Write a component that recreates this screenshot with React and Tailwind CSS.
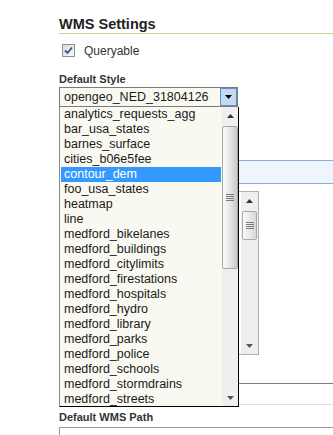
import React from "react";

const styles = [
  "analytics_requests_agg",
  "bar_usa_states",
  "barnes_surface",
  "cities_b06e5fee",
  "contour_dem",
  "foo_usa_states",
  "heatmap",
  "line",
  "medford_bikelanes",
  "medford_buildings",
  "medford_citylimits",
  "medford_firestations",
  "medford_hospitals",
  "medford_hydro",
  "medford_library",
  "medford_parks",
  "medford_police",
  "medford_schools",
  "medford_stormdrains",
  "medford_streets",
];

function Arrow({ up, color = "#333" }) {
  return (
    <svg width="7" height="4" viewBox="0 0 7 4">
      {up ? (
        <path d="M0 4 L3.5 0 L7 4 Z" fill={color} />
      ) : (
        <path d="M0 0 L7 0 L3.5 4 Z" fill={color} />
      )}
    </svg>
  );
}

function Grip() {
  return (
    <div className="flex flex-col gap-[1px]">
      <div className="w-[8px] h-[1px] bg-[#7a7a7a]" />
      <div className="w-[8px] h-[1px] bg-[#7a7a7a]" />
      <div className="w-[8px] h-[1px] bg-[#7a7a7a]" />
      <div className="w-[8px] h-[1px] bg-[#7a7a7a]" />
    </div>
  );
}

function Checkbox() {
  return (
    <div className="w-[13px] h-[13px] border border-[#8f8f8f] bg-gradient-to-br from-[#dcdcdc] to-[#f7f7f7] flex items-center justify-center">
      <svg width="9" height="9" viewBox="0 0 9 9">
        <path d="M1 4.5 L3.5 7 L8 1.5" stroke="#3a4f9a" strokeWidth="1.8" fill="none" />
      </svg>
    </div>
  );
}

export default function App() {
  return (
    <div className="relative w-[333px] h-[435px] overflow-hidden bg-white font-['Liberation_Sans',Arial,sans-serif] text-[#222]">
      <div className="pl-[59px] pt-[16px]">
        <h2 className="text-[14.5px] leading-[17px] font-bold text-[#222] border-b border-[#c5df8f]">
          WMS Settings
        </h2>

        <label className="mt-[10px] ml-[3px] flex items-center gap-[9px] h-[13px]">
          <Checkbox />
          <span className="text-[12px] text-[#333]">Queryable</span>
        </label>

        <div className="mt-[16px] mb-[1px] text-[11px] leading-[13px] font-bold text-[#333]">
          Default Style
        </div>

        {/* closed select */}
        <div className="w-[179px] h-[20px] border border-[#7b7b7b] bg-[#f9f9f1] flex">
          <div className="flex-1 pl-[4px] text-[12.5px] leading-[18px] text-[#1a1a1a]">
            opengeo_NED_31804126
          </div>
          <div className="w-[17px] h-full border border-[#5f8fc4] bg-[#c3d9f2] flex items-center justify-center">
            <Arrow color="#000" />
          </div>
        </div>

        {/* things behind the open list */}
        <div className="mt-[53px] h-[24px] w-[274px] border-y border-[#86acd9] bg-[#eef5ff]" />

        <div className="mt-[7px] w-[200px] h-[164px] border border-[#b0b0b0] bg-white flex justify-end">
          <div className="w-[17px] h-full bg-[#eeeeee] flex flex-col">
            <div className="h-[17px] flex items-center justify-center">
              <Arrow up />
            </div>
            <div className="mt-[2px] mx-[1px] h-[29px] rounded-[2px] border border-[#a9a9a9] bg-gradient-to-r from-[#fafafa] to-[#d8d8d8] flex items-center justify-center">
              <Grip />
            </div>
            <div className="flex-1" />
            <div className="h-[17px] flex items-center justify-center">
              <Arrow color="#555" />
            </div>
          </div>
        </div>

        <div className="mt-[28px] w-[274px] h-[22px] border-t border-[#7d7d7d] border-b border-b-[#dedede]" />

        <div className="mt-[6px] text-[11px] leading-[13px] font-bold text-[#333]">
          Default WMS Path
        </div>
        <div className="mt-[3px] w-[274px] h-[22px] border-t border-l border-[#9a9a9a]" />
      </div>

      {/* open dropdown list */}
      <div className="absolute left-[59px] top-[107px] w-[180px] h-[300px] border-l border-[#8a8a8a] border-r border-r-black border-b border-b-black bg-[#f9f9f1] flex">
        <div className="flex-1 px-[1px] overflow-hidden">
          {styles.map((s) => (
            <div
              key={s}
              className={`h-[15px] pl-[3px] text-[12.5px] leading-[15px] whitespace-nowrap ${
                s === "contour_dem" ? "bg-[#3399ff] text-white" : "text-[#1a1a1a]"
              }`}
            >
              {s}
            </div>
          ))}
        </div>
        <div className="w-[16px] h-full bg-[#efefef] flex flex-col">
          <div className="h-[17px] flex items-center justify-center">
            <Arrow up />
          </div>
          <div className="mt-[2px] h-[143px] rounded-[2px] border border-[#a7a7a7] bg-gradient-to-r from-[#fbfbfb] via-[#e6e6e6] to-[#c9c9c9] flex items-center justify-center">
            <Grip />
          </div>
          <div className="flex-1" />
          <div className="h-[17px] flex items-center justify-center">
            <Arrow color="#555" />
          </div>
        </div>
      </div>
    </div>
  );
}
